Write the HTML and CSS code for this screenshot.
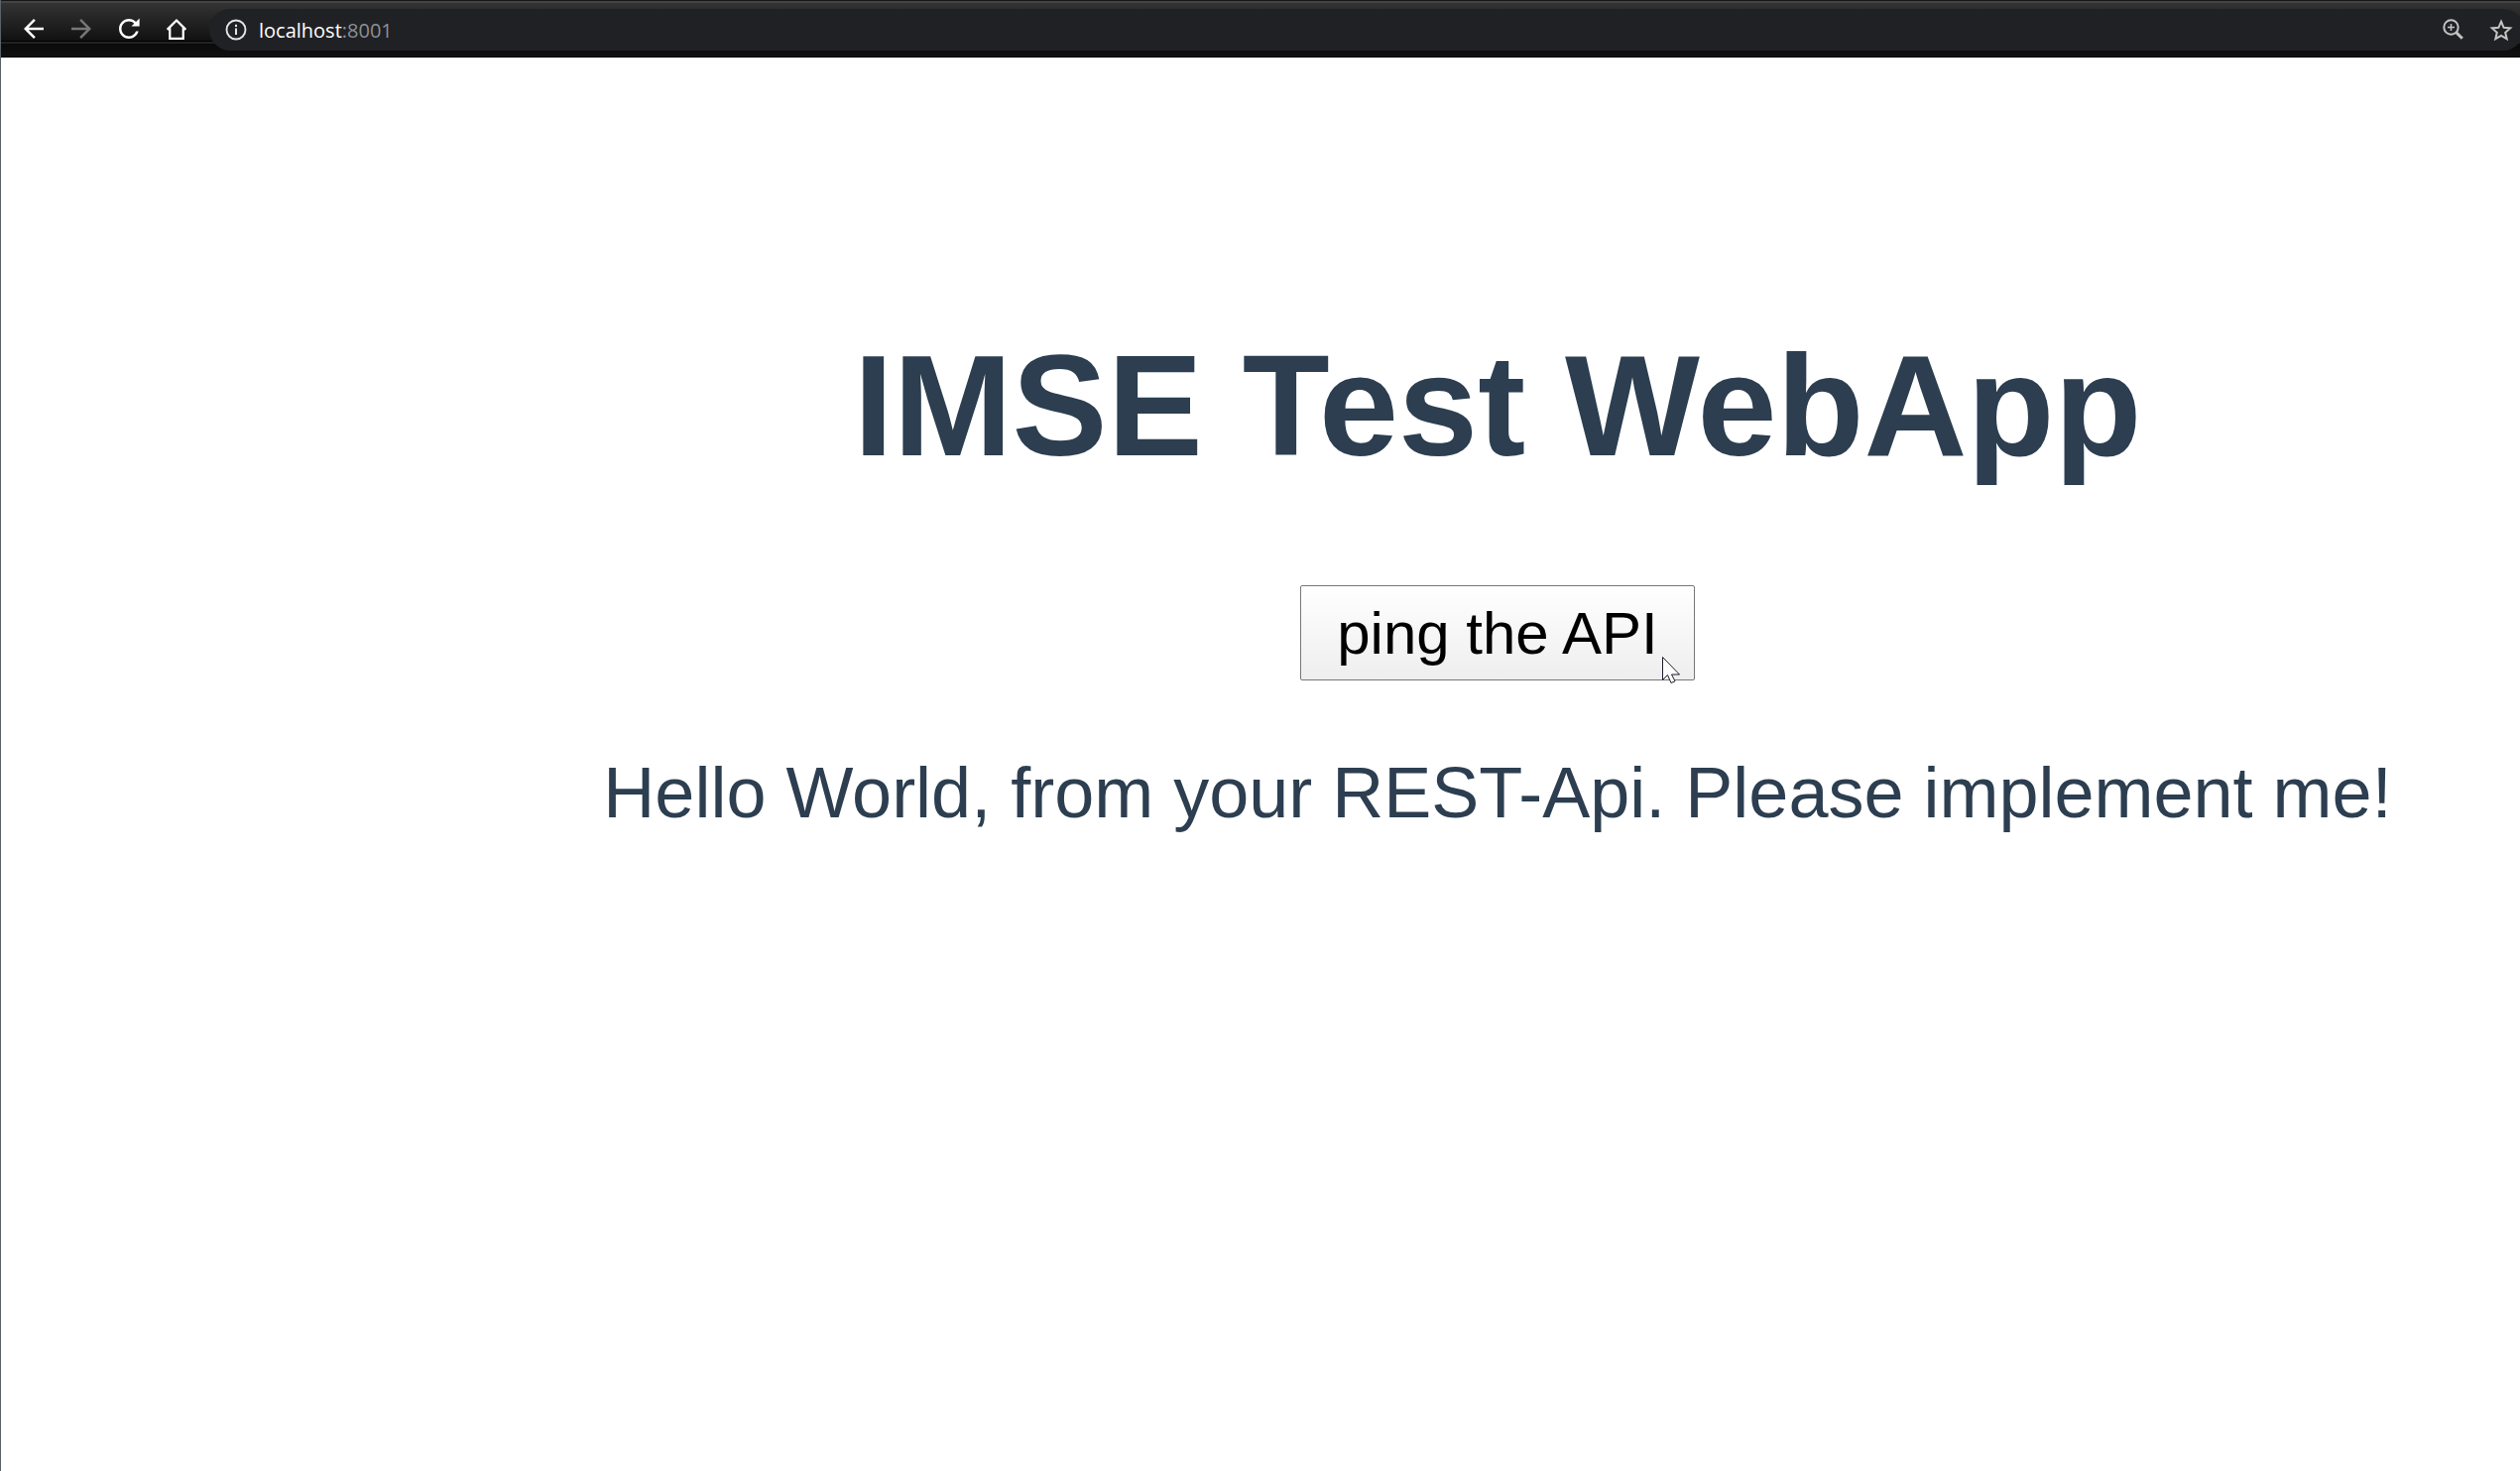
FILE: index.html
```html
<!DOCTYPE html>
<html lang="en">
<head>
<meta charset="utf-8">
<title>IMSE Test WebApp</title>
<link rel="stylesheet" href="styles.css">
</head>
<body>
<header class="toolbar">
  <nav class="nav" aria-label="Browser">
    <button class="icon-button" type="button" aria-label="Back"><svg viewBox="0 0 24 24"><path d="M20 11H7.83l5.59-5.59L12 4l-8 8 8 8 1.41-1.41L7.83 13H20v-2z"/></svg></button>
    <button class="icon-button icon-button-off" type="button" aria-label="Forward"><svg viewBox="0 0 24 24"><path d="M12 4l-1.41 1.41L16.17 11H4v2h12.17l-5.58 5.59L12 20l8-8z"/></svg></button>
    <button class="icon-button" type="button" aria-label="Reload"><svg viewBox="0 0 24 24"><path d="M17.65 6.35C16.2 4.9 14.21 4 12 4c-4.42 0-7.99 3.58-7.99 8s3.57 8 7.99 8c3.73 0 6.84-2.55 7.73-6h-2.08c-.82 2.33-3.04 4-5.65 4-3.31 0-6-2.69-6-6s2.69-6 6-6c1.66 0 3.14.69 4.22 1.78L14 10h6.500V3.500z"/></svg></button>
    <button class="icon-button" type="button" aria-label="Home"><svg viewBox="0 0 24 24"><path d="M4.500 12.700 12 5.200l7.500 7.500M6.600 11.400v8.400h10.800v-8.400" fill="none" stroke="currentColor" stroke-width="1.800"/></svg></button>
  </nav>
  <div class="address">
    <svg class="info" viewBox="0 0 22 22"><circle cx="11" cy="11" r="9.500" fill="none" stroke="currentColor" stroke-width="1.900"/><path d="M10 5.700h2v2.200h-2zM10 9.600h2v6.400h-2z"/></svg>
    <span class="url"><span class="host">localhost</span>:8001</span>
    <button class="icon-button icon-button-soft" type="button" aria-label="Zoom"><svg viewBox="0 0 30 30"><g fill="none" stroke="currentColor"><circle cx="12.500" cy="12.500" r="7.200" stroke-width="2"/><path d="M12.500 9v7M9 12.500h7" stroke-width="1.500"/><path d="m17.500 17.500 6.300 6.300" stroke-width="3"/></g></svg></button>
    <button class="icon-button icon-button-soft" type="button" aria-label="Bookmark"><svg viewBox="0 0 30 30"><path d="m15 6.700 2.600 6.100 6.600.6-5 4.400 1.500 6.400-5.700-3.400-5.700 3.400 1.500-6.400-5-4.400 6.600-.6z" fill="none" stroke="currentColor" stroke-width="2"/></svg></button>
  </div>
</header>
<main class="app">
  <h1 class="title">IMSE Test WebApp</h1>
  <button class="ping" type="button">ping the API<svg class="cursor" viewBox="0 0 18 28"><path d="M.5.500v23l5-5 3.500 8 4-1.700-3.500-6.800h8z" fill="#fff" stroke="#1b1b2b"/></svg></button>
  <p class="message">Hello World, from your REST-Api. Please implement me!</p>
</main>
</body>
</html>
```
FILE: styles.css
```css
* {
  box-sizing: border-box;
}

body {
  margin: 0;
  min-height: 100vh;
  border-left: 1px solid #5b6168;
  background: #fff;
  overflow-x: hidden;
}

.toolbar {
  display: flex;
  height: 58px;
  padding: 9px 0 7px 18px;
  background:
    linear-gradient(#161616 0 1px, #444 1px 3px, transparent 3px),
    linear-gradient(#333 3px, #111 41px, #000 41px 42px, #222 42px 44px, #0a0a0a 44px, #111 57px, #000 57px);
}

.nav {
  display: flex;
  gap: 18px;
  padding-top: 5px;
}

.icon-button {
  flex: none;
  width: 30px;
  height: 30px;
  padding: 0;
  border: 0;
  background: none;
  color: #fff;
}

.icon-button svg {
  display: block;
  width: 30px;
  height: 30px;
  fill: currentColor;
}

.icon-button-off {
  color: #777;
}

.icon-button-soft {
  color: #c4c4c4;
}

.address {
  display: flex;
  flex: 1;
  align-items: center;
  gap: 18px;
  margin: 0 -4px 0 18px;
  padding: 0 8px 0 16px;
  border-radius: 21px;
  background: #202124;
  color: #e4e4e4;
}

.info {
  flex: none;
  width: 22px;
  height: 22px;
  margin-right: -6px;
  fill: currentColor;
}

.url {
  flex: 1;
  padding-top: 2px;
  color: #8d9094;
  font: 20px/28px "Open Sans", "Noto Sans", sans-serif;
}

.host {
  color: #fff;
}

.app {
  padding: 270px 0 0 478px;
  color: #2c3e50;
  font: 72px/83px "Liberation Sans", Arial, sans-serif;
  text-align: center;
  white-space: nowrap;
}

.title {
  margin: 0 0 98px;
  font-size: 144px;
  line-height: 164px;
}

.ping {
  position: relative;
  display: block;
  width: 398px;
  height: 96px;
  margin: 0 auto 72px;
  padding: 0;
  border: 1px solid #777;
  border-radius: 2px;
  background: linear-gradient(#fff, #eee);
  color: #000;
  font: 60px/69px "Liberation Sans", Arial, sans-serif;
}

.cursor {
  position: absolute;
  right: 14px;
  bottom: -5px;
  width: 18px;
  height: 28px;
}

.message {
  margin: 0;
}
```
